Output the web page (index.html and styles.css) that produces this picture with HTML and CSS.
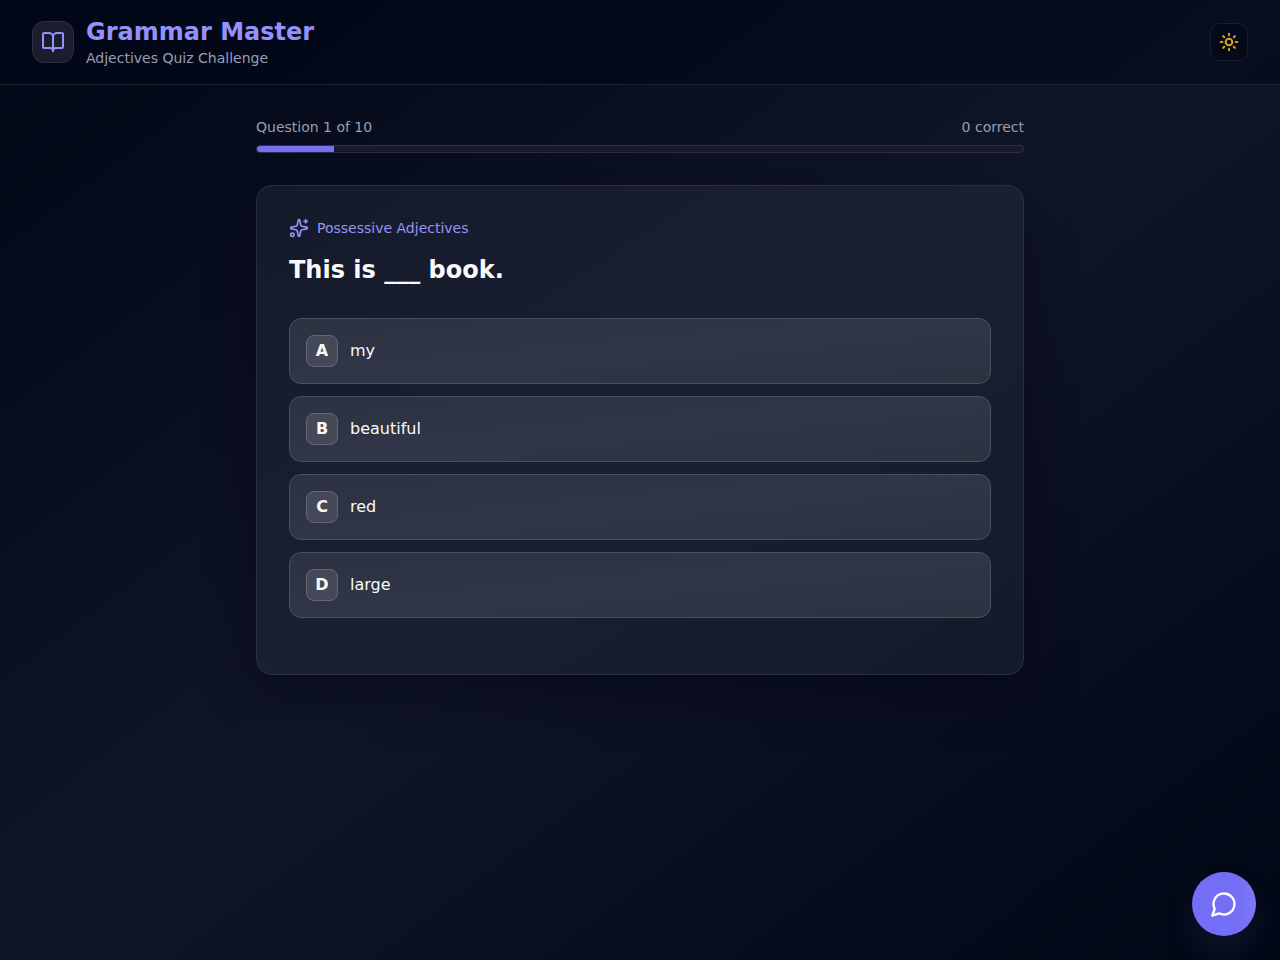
FILE: index.html
```html
<!DOCTYPE html>
<html lang="en">
<head>
<meta charset="utf-8">
<title>Grammar Master</title>
<link rel="stylesheet" href="styles.css">
</head>
<body>
<div class="page">
  <header class="header">
    <div class="brand">
      <div class="logo">
        <svg class="icon" width="24" height="24" viewBox="0 0 24 24"><path d="M12 7v14"/><path d="M3 18a1 1 0 0 1-1-1V4a1 1 0 0 1 1-1h5a4 4 0 0 1 4 4 4 4 0 0 1 4-4h5a1 1 0 0 1 1 1v13a1 1 0 0 1-1 1h-6a3 3 0 0 0-3 3 3 3 0 0 0-3-3z"/></svg>
      </div>
      <div>
        <h1 class="title">Grammar Master</h1>
        <p class="subtitle">Adjectives Quiz Challenge</p>
      </div>
    </div>
    <button class="theme" aria-label="Toggle theme">
      <svg class="icon sun" width="20" height="20" viewBox="0 0 24 24"><circle cx="12" cy="12" r="4"/><path d="M12 2v2M12 20v2M4.93 4.93l1.41 1.41M17.66 17.66l1.41 1.41M2 12h2M20 12h2M6.34 17.66l-1.41 1.41M19.07 4.93l-1.41 1.41"/></svg>
    </button>
  </header>
  <main class="main">
    <div class="status"><span>Question 1 of 10</span><span>0 correct</span></div>
    <div class="track"><div class="bar" style="width: 77px"></div></div>
    <section class="card">
      <div class="category">
        <svg class="icon" width="20" height="20" viewBox="0 0 24 24"><path d="M11.017 2.814a1 1 0 0 1 1.966 0l1.051 5.558a2 2 0 0 0 1.594 1.594l5.558 1.051a1 1 0 0 1 0 1.966l-5.558 1.051a2 2 0 0 0-1.594 1.594l-1.051 5.558a1 1 0 0 1-1.966 0l-1.051-5.558a2 2 0 0 0-1.594-1.594l-5.558-1.051a1 1 0 0 1 0-1.966l5.558-1.051a2 2 0 0 0 1.594-1.594z"/><path d="M20 2v4M22 4h-4"/><circle cx="4" cy="20" r="2"/></svg>
        <span>Possessive Adjectives</span>
      </div>
      <h2 class="question">This is ___ book.</h2>
      <div class="options">
        <button class="option"><span class="letter">A</span><span>my</span></button>
        <button class="option"><span class="letter">B</span><span>beautiful</span></button>
        <button class="option"><span class="letter">C</span><span>red</span></button>
        <button class="option"><span class="letter">D</span><span>large</span></button>
      </div>
    </section>
  </main>
  <button class="chat" aria-label="Open chat">
    <svg class="icon" width="28" height="28" viewBox="0 0 24 24"><path d="M7.9 20A9 9 0 1 0 4 16.1L2 22Z"/></svg>
  </button>
</div>
</body>
</html>
```
FILE: styles.css
```css
* { box-sizing: border-box; margin: 0; }
body { font-family: "DejaVu Sans", sans-serif; color: #fafafa; background: #020817; }
button { font: inherit; color: inherit; padding: 0; }
.icon { display: block; fill: none; stroke: currentColor; stroke-width: 2; stroke-linecap: round; stroke-linejoin: round; }
.sun { stroke-width: 2.4; }
.page { height: 960px; overflow: hidden; background: linear-gradient(to bottom right, #020716, #101528 50%, #020716); }
.header { height: 85px; padding: 0 32px; display: flex; align-items: center; justify-content: space-between; background: rgba(2, 7, 24, .55); border-bottom: 1px solid rgba(255, 255, 255, .1); }
.brand { display: flex; align-items: center; gap: 12px; }
.logo { width: 42px; height: 42px; display: grid; place-items: center; border-radius: 12px; color: #9590fb; background: #191d2e; border: 1px solid #2c3040; }
.title { font-size: 24px; line-height: 32px; font-weight: 700; color: #9590fb; }
.subtitle { font-size: 14px; line-height: 20px; color: #9a9db0; }
.theme { width: 38px; height: 38px; display: grid; place-items: center; border-radius: 10px; color: #d4a422; background: #040a19; border: 1px solid #1b2030; }
.main { width: 768px; margin: 32px auto 0; }
.status { display: flex; justify-content: space-between; font-size: 14px; line-height: 20px; color: #9a9db0; }
.track { height: 8px; margin-top: 8px; border: 1px solid #2b3040; border-radius: 4px; background: #161a2b; overflow: hidden; }
.bar { height: 100%; background: #746ff5; }
.card { height: 490px; margin-top: 32px; padding: 32px; border: 1px solid #2b3041; border-radius: 16px; background: linear-gradient(to bottom right, #151a2b, #1a1f31 50%, #151a2b); box-shadow: 0 20px 50px rgba(0, 4, 20, .42); }
.category { display: flex; align-items: center; gap: 8px; font-size: 14px; line-height: 20px; color: #9992f5; }
.question { margin-top: 16px; font-size: 24px; line-height: 32px; font-weight: 700; }
.options { margin-top: 32px; display: grid; gap: 12px; }
.option { height: 66px; padding: 0 16px; display: flex; align-items: center; gap: 12px; text-align: left; font-size: 16px; line-height: 24px; border: 1px solid #4b4f5f; border-radius: 12px; background: linear-gradient(to bottom right, #2d3241, #303548 50%, #2d3241); }
.letter { width: 32px; height: 32px; display: grid; place-items: center; font-weight: 700; border: 1px solid #67677c; border-radius: 8px; background: #454957; }
.chat { position: fixed; right: 24px; bottom: 24px; width: 64px; height: 64px; display: grid; place-items: center; border: 0; border-radius: 50%; color: #fff; background: linear-gradient(to right, #736ef5 70%, #7c78f7); box-shadow: 0 18px 32px rgba(90, 100, 160, .14); }
```
